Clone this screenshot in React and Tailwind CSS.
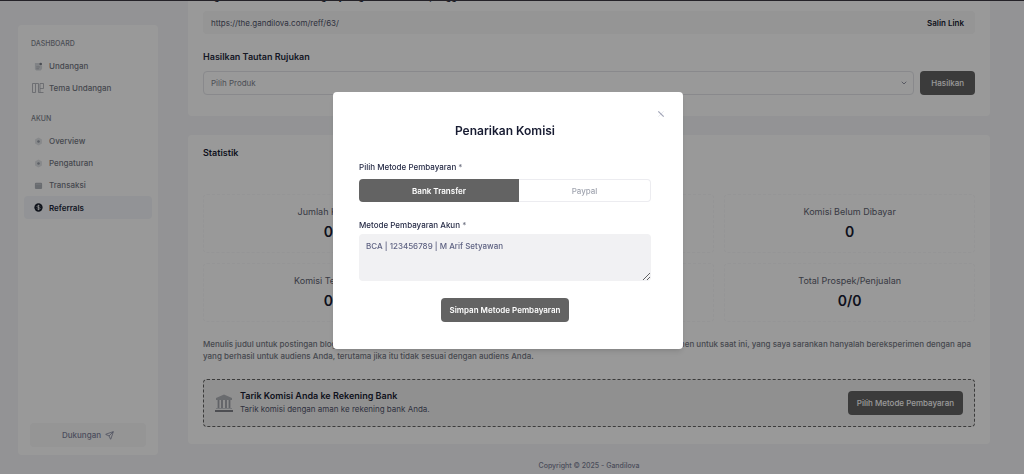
import { LuChevronDown, LuSend } from "react-icons/lu";

const dashboardLinks = [
  { label: "Undangan", icon: "invite" },
  { label: "Tema Undangan", icon: "theme" },
];

const accountLinks = [
  { label: "Overview", icon: "overview" },
  { label: "Pengaturan", icon: "settings" },
  { label: "Transaksi", icon: "wallet" },
  { label: "Referrals", icon: "dollar", active: true },
];

const stats = [
  { label: "Jumlah Komisi", value: "0" },
  { label: "Jumlah Klik", value: "0" },
  { label: "Komisi Belum Dibayar", value: "0" },
  { label: "Komisi Terbayar", value: "0" },
  { label: "Total Komisi", value: "0" },
  { label: "Total Prospek/Penjualan", value: "0/0" },
];

function NavIcon({ name }) {
  if (name === "theme") {
    return (
      <svg viewBox="0 0 12 10" className="h-[10px] w-3" fill="none" stroke="#a4a8b0" strokeWidth="0.8">
        <path d="M.5.5h3v9h-3zM3.5.5h3v9M8 .5h3.5v5H8zM6.5 9.5h5M8 5.5v4" />
      </svg>
    );
  }
  if (name === "dollar") {
    return (
      <svg viewBox="0 0 10 10" className="h-[9px] w-[9px]">
        <circle cx="5" cy="5" r="4.6" fill="#1c2230" />
        <path
          d="M6.6 3.7C6.3 3 5.7 2.9 5 2.9c-.9 0-1.6.4-1.6 1.1 0 1.4 3.3.6 3.3 2 0 .7-.7 1.1-1.7 1.1-.8 0-1.5-.3-1.7-1M5 2v6"
          fill="none"
          stroke="#ffffff"
          strokeWidth="0.8"
        />
      </svg>
    );
  }
  if (name === "wallet") {
    return (
      <svg viewBox="0 0 10 10" className="h-[9px] w-[9px]">
        <rect x="1" y="2" width="8" height="7" rx="1.2" fill="#b0b4bb" />
        <path d="M2 3.7h6" stroke="#c9ccd2" strokeWidth="0.7" />
      </svg>
    );
  }
  if (name === "invite") {
    return (
      <svg viewBox="0 0 10 10" className="h-[9px] w-[9px]">
        <path d="M1 1h5v3h3v3.5L7.5 9.5H2.5L1 8z" fill="#d8dbe0" />
        <path d="M2.5 5.5h4M2.5 7.5h3" stroke="#a4a8b0" strokeWidth="0.8" />
        <circle cx="7.4" cy="2.2" r="1.5" fill="#7b808a" />
      </svg>
    );
  }
  return (
    <svg viewBox="0 0 10 10" className="h-[9px] w-[9px]">
      <path d="M5 .6 8.8 2.8v4.4L5 9.4 1.2 7.2V2.8z" fill="#e2e4e8" />
      <circle cx="5" cy="5" r="1.4" fill="#9a9fa9" />
    </svg>
  );
}

function NavGroup({ title, links }) {
  return (
    <div>
      <h2 className="px-[7px] text-[7px] leading-[10px] font-medium text-[#80848f] uppercase">{title}</h2>
      <ul className="mt-[6px]">
        {links.map((link) => (
          <li key={link.label}>
            <a
              href="#"
              className={
                link.active
                  ? "flex h-[23px] items-center gap-1 rounded bg-[#f4f6fa] px-[7px] text-[8px] font-semibold text-[#23283a]"
                  : "flex h-[22px] items-center gap-1 px-[7px] text-[8px] font-medium text-[#747883]"
              }
            >
              <span className="flex w-[14px] shrink-0 justify-center">
                <NavIcon name={link.icon} />
              </span>
              {link.label}
            </a>
          </li>
        ))}
      </ul>
    </div>
  );
}

function Sidebar() {
  return (
    <aside className="flex min-h-[430px] w-[140px] shrink-0 flex-col self-start rounded bg-white px-[6px] pt-[14px] pb-2">
      <nav className="flex grow flex-col gap-[15px]">
        <NavGroup title="Dashboard" links={dashboardLinks} />
        <NavGroup title="Akun" links={accountLinks} />
      </nav>
      <button
        type="button"
        className="mx-[6px] flex h-6 items-center justify-center gap-1 rounded bg-[#f8f8f9] text-[8px] font-medium text-[#7e8299]"
      >
        Dukungan
        <LuSend className="h-[9px] w-[9px]" />
      </button>
    </aside>
  );
}

function BankIcon() {
  return (
    <svg viewBox="0 0 18 18" className="h-[18px] w-[18px] shrink-0">
      <path d="M9 .5 17 4v2H1V4z" fill="#b0b2b8" />
      <path d="M3.5 6v8M7 6v8M11 6v8M14.5 6v8" stroke="#a0a3aa" strokeWidth="1.8" />
      <path d="M1 14.5h16" stroke="#c4c6cb" />
      <path d="M0 17h18" stroke="#50535c" strokeWidth="1.4" />
    </svg>
  );
}

function WithdrawModal() {
  return (
    <div className="fixed inset-0 flex items-start justify-center bg-black/40 pt-[92px] pr-2">
      <div
        role="dialog"
        aria-modal="true"
        aria-labelledby="withdraw-title"
        className="relative w-full max-w-[350px] rounded bg-white pt-[31px] pr-8 pb-[27px] pl-[26px] shadow-md"
      >
        <button type="button" aria-label="Tutup" className="absolute top-[18px] right-[18px] text-[#a1a5b7]">
          <svg viewBox="0 0 8 8" className="h-2 w-2" fill="none" stroke="currentColor">
            <path d="m1.3 1.3 5.4 5.4" strokeWidth="1.2" />
            <path d="M6.7 1.3 1.3 6.7" strokeWidth="0.5" opacity="0.5" />
          </svg>
        </button>
        <h2 id="withdraw-title" className="text-center text-[12px] leading-4 font-semibold text-[#181c32]">
          Penarikan Komisi
        </h2>
        <form onSubmit={(e) => e.preventDefault()}>
          <p className="mt-[22px] text-[8px] leading-3 font-medium text-[#252a45]">
            Pilih Metode Pembayaran <span className="text-[#6d7080]">*</span>
          </p>
          <div className="mt-[6px] flex h-[23px]">
            <button type="button" className="w-[160px] rounded-l bg-[#636363] text-[8px] font-semibold text-white">
              Bank Transfer
            </button>
            <button
              type="button"
              className="grow rounded-r border border-l-0 border-[#ececf0] text-[8px] font-medium text-[#a1a5b0]"
            >
              Paypal
            </button>
          </div>
          <label htmlFor="account" className="mt-[17px] block text-[8px] leading-3 font-medium text-[#252a45]">
            Metode Pembayaran Akun <span className="text-[#6d7080]">*</span>
          </label>
          <textarea
            id="account"
            defaultValue="BCA | 123456789 | M Arif Setyawan"
            className="mt-[3px] block h-[47px] w-full rounded bg-[#f1f1f3] px-[7px] py-[6px] text-[8px] leading-3 font-medium text-[#5e6282]"
          />
          <button
            type="submit"
            className="mx-auto mt-[17px] block h-6 rounded bg-[#636363] px-[9px] text-[8px] font-semibold text-white"
          >
            Simpan Metode Pembayaran
          </button>
        </form>
      </div>
    </div>
  );
}

export default function App() {
  return (
    <div className="h-screen overflow-hidden bg-[#f5f6f8] font-['Inter',sans-serif]">
      <div className="flex gap-[30px] pr-[34px] pl-[18px]">
        <div className="pt-[25px]">
          <Sidebar />
        </div>
        <main className="min-w-0 grow">
          <section className="rounded-b bg-white px-[15px] pb-[21px]">
            {/* heading is scrolled almost out of view */}
            <div className="flex h-[2px] items-end overflow-hidden">
              <h2 className="shrink-0 text-[9px] leading-[10px] font-semibold text-[#252a3c]">
                Bagikan tautan referral dengan jaringan Anda untuk pengguna
              </h2>
            </div>
            <div className="mt-[9px] flex h-[23px] items-center rounded bg-[#f8f8f8]">
              <input
                type="text"
                readOnly
                aria-label="Tautan rujukan"
                value="https://the.gandilova.com/reff/63/"
                className="min-w-0 grow px-2 text-[8px] text-[#50546a]"
              />
              <button type="button" className="px-[11px] text-[8px] font-semibold text-[#181c32]">
                Salin Link
              </button>
            </div>
            <label htmlFor="product" className="mt-4 block text-[9px] leading-[14px] font-semibold text-[#252a3c]">
              Hasilkan Tautan Rujukan
            </label>
            <div className="mt-[7px] flex h-6 gap-[6px]">
              <div className="relative grow">
                <select
                  id="product"
                  className="block h-6 w-full appearance-none rounded border border-[#e4e5ea] px-[7px] text-[8px] text-[#80848f]"
                >
                  <option>Pilih Produk</option>
                </select>
                <LuChevronDown className="pointer-events-none absolute top-2 right-[6px] h-2 w-2 text-[#5e6278]" />
              </div>
              <button type="button" className="rounded bg-[#636363] px-[11px] text-[8px] font-medium text-white">
                Hasilkan
              </button>
            </div>
          </section>

          <section className="mt-[19px] rounded bg-white px-[15px] pt-[11px] pb-[17px]">
            <h2 className="text-[9px] leading-[14px] font-semibold text-[#181c32]">Statistik</h2>
            <div className="mt-[34px] grid grid-cols-3 gap-[10px]">
              {stats.map((stat) => (
                <div
                  key={stat.label}
                  className="flex h-[59px] flex-col items-center rounded border border-dashed border-[#f8f8fa] pt-[11px]"
                >
                  <span className="text-[9px] leading-3 text-[#5e6270]">{stat.label}</span>
                  <span className="mt-1 text-[14px] leading-5 font-semibold text-[#181c32]">{stat.value}</span>
                </div>
              ))}
            </div>
            <p className="mt-4 text-[8px] leading-3 font-medium text-[#747883]">
              Menulis judul untuk postingan blog adalah sebuah seni tersendiri dan juga ilmu pengetahuan.
              Untuk menghemat waktu dokumen untuk saat ini, yang saya sarankan hanyalah bereksperimen dengan
              apa yang berhasil untuk audiens Anda, terutama jika itu tidak sesuai dengan audiens Anda.
            </p>
            <div className="mt-[17px] flex h-12 items-center rounded border border-dashed border-[#636363] bg-[#f1f1f1] px-[11px]">
              <BankIcon />
              <div className="ml-[7px] grow pb-[2px]">
                <h3 className="text-[9px] leading-[14px] font-semibold text-[#181c32]">
                  Tarik Komisi Anda ke Rekening Bank
                </h3>
                <p className="text-[8px] leading-3 text-[#50546a]">
                  Tarik komisi dengan aman ke rekening bank Anda.
                </p>
              </div>
              <button type="button" className="h-6 rounded bg-[#636363] px-[9px] text-[8px] font-medium text-white">
                Pilih Metode Pembayaran
              </button>
            </div>
          </section>

          <footer className="mt-[17px] text-center text-[7px] leading-[10px] font-medium text-[#7e8299]">
            Copyright © 2025 - Gandilova
          </footer>
        </main>
      </div>
      <WithdrawModal />
      <div className="fixed inset-x-0 top-0 h-px bg-[#242228]" />
    </div>
  );
}
